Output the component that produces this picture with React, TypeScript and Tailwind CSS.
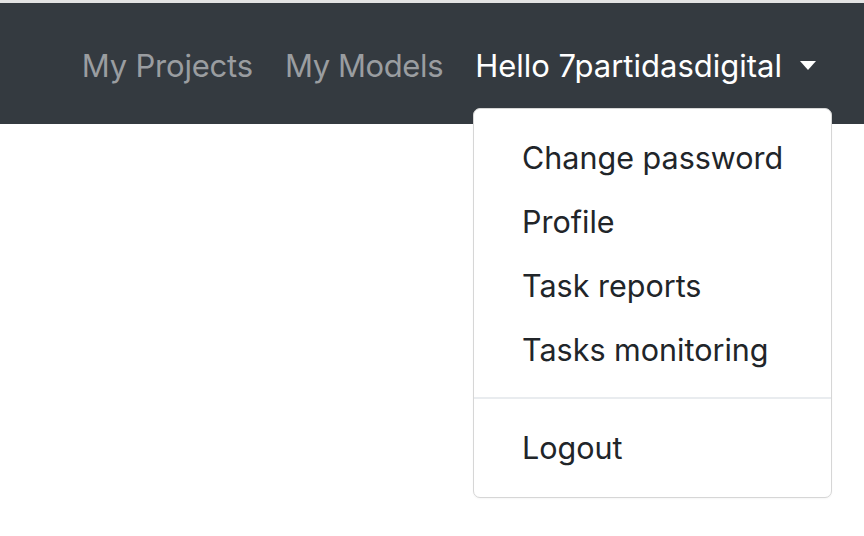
export default function App() {
  const items = ['Change password', 'Profile', 'Task reports', 'Tasks monitoring']

  return (
    <div className="w-[864px] h-[536px] bg-white overflow-hidden" style={{ fontFamily: 'Inter, "Noto Sans", sans-serif' }}>
      <div className="h-[3px] bg-[#e3e3e3]" />
      <nav className="h-[121px] bg-[#343a40] flex items-center justify-end pr-[32px] pt-[4px]">
        <ul className="flex items-center text-[31px] leading-[48px]">
          <li>
            <a className="block px-[16px] text-[#9a9da0] tracking-[-0.2px]">My Projects</a>
          </li>
          <li>
            <a className="block px-[16px] text-[#9a9da0] tracking-[-0.4px]">My Models</a>
          </li>
          <li className="relative">
            <a className="flex items-center px-[16px] text-white">
              Hello 7partidasdigital
              <span className="ml-[18px] w-0 h-0 border-l-[8px] border-r-[8px] border-t-[9px] border-l-transparent border-r-transparent border-t-white" />
            </a>
            {/* dropdown menu, right aligned to the toggle */}
            <div className="absolute right-0 top-[66px] w-[359px] bg-white border border-[#d6d6d6] rounded-[7px] pt-[17px] pb-[17px] text-[#212529] text-[30.5px] shadow-[0_1px_2px_rgba(0,0,0,0.04)]">
              {items.map((t) => (
                <div key={t} className="pl-[48px] pr-[47px] py-[8px] leading-[48px] whitespace-nowrap">
                  {t}
                </div>
              ))}
              <div className="mt-[15px] mb-[17px] h-[2px] bg-[#e9ecef]" />
              <div className="pl-[48px] pr-[47px] py-[8px] leading-[48px]">Logout</div>
            </div>
          </li>
        </ul>
      </nav>
    </div>
  )
}
